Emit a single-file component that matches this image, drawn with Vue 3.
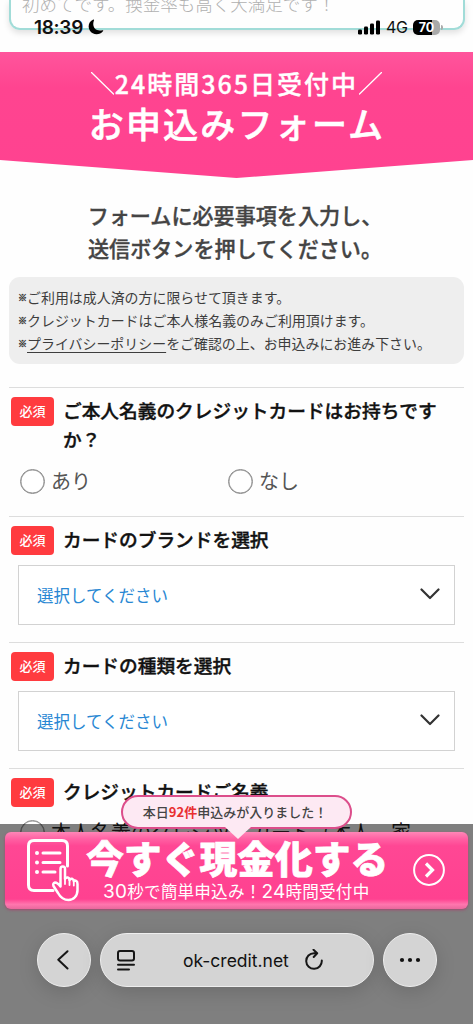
<script setup>
const notes = ['ご利用は成人済の方に限らせて頂きます。', 'クレジットカードはご本人様名義のみご利用頂けます。']
const selects = ['カードのブランドを選択', 'カードの種類を選択']
</script>

<template>
  <div class="screen">
    <main class="page">
      <div class="review">初めてです。換金率も高く大満足です！</div>
      <header class="banner">
        <div class="catch">
          <svg width="23" height="23" viewBox="0 0 23 23"><path d="M.5.5l22 21.5" /></svg>
          <span>24時間365日受付中</span>
          <svg width="23" height="23" viewBox="0 0 23 23"><path d="M22.5.5l-22 21.5" /></svg>
        </div>
        <h1>お申込みフォーム</h1>
      </header>
      <h2>フォームに必要事項を入力し、<br />送信ボタンを押してください。</h2>
      <div class="notice">
        <p v-for="n in notes" :key="n"><i>※</i>{{ n }}</p>
        <p><i>※</i><a>プライバシーポリシー</a>をご確認の上、お申込みにお進み下さい。</p>
      </div>
      <section class="row first">
        <div class="head"><b class="badge">必須</b><span class="label">ご本人名義のクレジットカードはお持ちですか？</span></div>
        <div class="radios">
          <label><i class="radio"></i>あり</label>
          <label><i class="radio"></i>なし</label>
        </div>
      </section>
      <section v-for="s in selects" :key="s" class="row pick">
        <div class="head"><b class="badge">必須</b><span class="label">{{ s }}</span></div>
        <div class="select">
          <span>選択してください</span>
          <svg width="20" height="12" viewBox="0 0 20 12"><path d="M1.5 1.5l8.5 8.5 8.5-8.5" /></svg>
        </div>
      </section>
      <section class="row last">
        <div class="head"><b class="badge">必須</b><span class="label">クレジットカードご名義</span></div>
        <div class="radios single"><label><i class="radio"></i>本人名義のクレジットカード（本人、家</label></div>
      </section>
    </main>

    <div class="status">
      <span class="time">18:39</span>
      <svg class="moon" width="16" height="16" viewBox="0 0 16 16"><path d="M5.3.5C.8 2.2-.6 7.6 1.8 11.5c3 4.8 10 5 13.3.5.3-.6 0-1-.7-.8C7.5 12.8 3.5 7.7 6 1.3 6.2.7 5.9.3 5.3.5z" /></svg>
      <svg class="signal" width="23" height="15" viewBox="0 0 23 15"><rect y="9.5" width="4" height="5" rx="1.3" /><rect x="6" y="6.5" width="4" height="8" rx="1.3" /><rect x="12" y="3.5" width="4" height="11" rx="1.3" /><rect x="18" y=".5" width="4" height="14" rx="1.3" /></svg>
      <span class="net">4G</span>
      <span class="battery">70</span><i class="nub"></i>
    </div>

    <div class="bottom">
      <div class="cta">
        <svg class="form" width="52" height="64" viewBox="0 0 52 64">
          <path d="M40.5 27V7q0-5.5-5.5-5.5H7Q1.5 1.500 1.500 7v39q0 5.500 5.500 5.500h19" />
          <path d="M16 14h17M16 23.5h17M16 33h12" />
          <circle cx="10" cy="14" r="2" /><circle cx="10" cy="23.5" r="2" /><circle cx="10" cy="33" r="2" />
          <path class="hand" d="M33.5 45V30q0-2.5 2.3-2.5T38 30v10q1-2 2.8-1.5 1.7.5 1.7 2.5 1-1.7 2.7-1.2 1.6.6 1.6 2.4 1-1 2.4-.3Q50.500 42.500 50.500 45v6c0 6-4 10-9 10-5.500 0-8-2.500-10.500-7l-4.500-7q-1-3 1.500-3.500 2.500 0 5.500 4z" />
          <path class="thin" d="M38 39v6M42.5 41v5M46.8 42.5v4" />
        </svg>
        <div class="words">
          <strong>今すぐ現金化する</strong>
          <small><i>30</i>秒で簡単申込み！<i>24</i>時間受付中</small>
        </div>
        <svg class="go" width="32" height="32" viewBox="0 0 32 32"><circle cx="16" cy="16" r="14.9" /><path d="M13 9.5l6.5 6.5-6.5 6.5" /></svg>
      </div>
      <nav class="browser">
        <div class="round"><svg width="12" height="20" viewBox="0 0 12 20"><path d="M10.5 1.2L1.3 9.8l9.2 8.7" /></svg></div>
        <div class="address">
          <svg class="reader" width="18" height="21" viewBox="0 0 18 21"><rect x="1" y="1" width="16" height="9.5" rx="2" /><path d="M1 14.7h16M1 19.5h11" /></svg>
          <span>ok-credit.net</span>
          <svg class="reload" width="18" height="21" viewBox="0 0 18 21"><path d="M16.8 11.5A7.8 7.8 0 1 1 9 4.2h3M8.5.8l3.7 3.5-3.5 3.700" /></svg>
        </div>
        <div class="round"><svg class="dots" width="22" height="6" viewBox="0 0 22 6"><circle cx="3" cy="3" r="2.1" /><circle cx="11" cy="3" r="2.1" /><circle cx="19" cy="3" r="2.1" /></svg></div>
      </nav>
    </div>
    <div class="balloon">
      <span>本日<em>92件</em>申込みが入りました！</span>
      <svg width="26" height="13" viewBox="0 0 26 13"><path d="M0 0h26L13 12z" /></svg>
    </div>
  </div>
</template>

<style>
body { margin: 0; background: #fefefe; }
</style>
<style scoped>
* { box-sizing: border-box; }
.screen { position: relative; width: 473px; height: 1024px; overflow: hidden; background: #fefefe; font-family: "Noto Sans CJK JP", sans-serif; }
h1, h2, p { margin: 0; }
i, em { font-style: normal; }
svg { display: block; flex: none; fill: none; stroke-linecap: round; stroke-linejoin: round; }
.review { width: 456px; height: 30px; margin: 0 9px; padding-left: 11px; border: 2px solid #a1dcd8; border-top: 0; border-radius: 0 0 11px 11px; box-shadow: 0 3px 6px #0000001f; color: #b0b0b0; font-size: 17.5px; font-weight: 300; line-height: 8px; white-space: nowrap; }
.banner { height: 126px; margin-top: 22px; padding-top: 15px; background: linear-gradient(#ff559c, #ff4490 28%, #ff4290); clip-path: polygon(0 0, 100% 0, 100% 108px, 50% 100%, 0 108px); color: #fff; }
.catch { display: flex; justify-content: center; align-items: center; height: 32px; gap: 1px; font-size: 25px; font-weight: 500; letter-spacing: 2px; white-space: nowrap; -webkit-text-stroke: .35px #fff; }
.catch span { line-height: 30px; padding-bottom: 1px; }
.catch svg { stroke: #fff; stroke-width: 1.3; }
h1 { text-align: center; height: 50px; line-height: 48px; padding-left: 1px; font-size: 35px; font-weight: 500; letter-spacing: 2.2px; -webkit-text-stroke: .6px #fff; }
h2 { margin-top: 21px; padding-right: 3px; text-align: center; color: #444; font-size: 21.1px; line-height: 33px; font-weight: 500; -webkit-text-stroke: .35px #444; }
.notice { height: 87px; margin: 12px 9px 0; padding: 8px 9px 0; border-radius: 11px; background: #eee; color: #3d3d3d; font-size: 13.95px; line-height: 24px; white-space: nowrap; }
.notice p { display: flex; height: 23px; }
.notice i { font-size: 9px; font-weight: 700; line-height: 25px; -webkit-text-stroke: .5px #3d3d3d; }
.notice a { text-decoration: underline; text-underline-offset: 3px; }
.row { margin: 0 9px; border-top: 1px solid #ddd; }
.first { margin-top: 23px; height: 129px; }
.pick { height: 126px; }
.head { display: flex; align-items: flex-start; padding: 9px 0 0 2px; }
.badge { flex: none; width: 43px; height: 29px; margin-right: 9px; border-radius: 4px; background: #ff3b3f; color: #fff; text-align: center; font-size: 13px; font-weight: 500; line-height: 28px; }
.label { color: #111; font-size: 18.7px; line-height: 29px; font-weight: 500; width: 380px; margin-top: -2px; margin-bottom: 2px; -webkit-text-stroke: .4px #111; }
.radios { display: flex; padding: 13px 0 0 11px; }
.radios label { display: flex; align-items: center; width: 208px; height: 26px; color: #555; font-size: 20px; font-weight: 400; line-height: 24px; white-space: nowrap; }
.radio { flex: none; width: 25px; height: 25px; margin-right: 6px; border: 1.5px solid #888; border-radius: 50%; background: #fff; box-shadow: inset 0 0 0 .5px #999; }
.single { padding-top: 12px; }
.single label { color: #222; }
.single .radio { background: none; }
.select { display: flex; align-items: center; justify-content: space-between; width: 437px; height: 60px; margin: 10px 0 0 9px; padding: 0 14px 0 18px; border: 1.5px solid #d2d2d2; background: #fff; color: #2887d3; font-size: 16.5px; }
.select span { margin-top: -1px; }
.select svg { stroke: #333; stroke-width: 2.2; margin-top: -3px; }
.status { position: absolute; top: 17px; left: 34px; right: 30px; height: 20px; display: flex; align-items: center; color: #111; font-family: Inter, sans-serif; }
.time { width: 50px; font-size: 19px; font-weight: 600; letter-spacing: -.3px; }
.moon { margin-left: 4px; fill: #000; }
.signal { margin-left: auto; fill: #000; }
.net { width: 22px; margin-left: 5px; font-size: 16px; letter-spacing: -.4px; }
.battery { width: 27px; height: 15px; margin-left: 5px; border-radius: 5px; background: linear-gradient(90deg, #000 72%, #a9a9a9 72%); color: #fff; text-align: center; font-size: 12.5px; font-weight: 700; line-height: 15px; }
.nub { width: 2px; height: 5px; margin-left: 1px; border-radius: 0 2px 2px 0; background: #aaa; }
.bottom { position: absolute; top: 824px; left: 0; width: 473px; height: 200px; padding-top: 8px; background: #0000007f; }
.cta { display: flex; width: 463px; height: 77px; margin-left: 5px; border-radius: 6px; background: linear-gradient(#ff86b7, #ff60a3 9%, #ff4794 18%, #ff4190 87%, #ff76ae 94%, #e9689d); box-shadow: 0 1px 3px #b52b68aa; }
.form { margin: 7px 0 0 22px; stroke: #fff; stroke-width: 3; }
.form circle { fill: #fff; stroke: none; }
.form .hand { fill: #ff4290; stroke-width: 2.5; }
.form .thin { stroke-width: 1.8; }
.words { width: 310px; margin-left: 7px; display: flex; flex-direction: column; color: #fff; white-space: nowrap; }
.words strong { height: 47px; font-size: 37.8px; line-height: 49px; font-weight: 900; -webkit-text-stroke: .7px #fff; }
.words small { display: flex; height: 24px; margin-left: 17px; font-size: 16.6px; letter-spacing: .2px; line-height: 24px; }
.words small i { font-family: Inter, sans-serif; font-size: 19px; font-weight: 400; line-height: 25px; }
.go { margin: 22px 0 0 17px; stroke: #fff; stroke-width: 2; }
.go path { stroke-width: 3.2; stroke-linecap: butt; stroke-linejoin: miter; }
.browser { display: flex; gap: 9px; margin: 24px 0 0 37px; }
.round, .address { display: flex; align-items: center; height: 54px; border: 1px solid #eee; border-radius: 27px; background: #d4d4d4; box-shadow: 0 5px 20px #00000026; }
.round { width: 54px; justify-content: center; }
.round svg { stroke: #161616; stroke-width: 2; margin-right: 3px; }
.round .dots { margin: 0 0 1px; fill: #111; stroke: none; }
.address { width: 274px; padding-left: 16px; color: #111; font-family: Inter, sans-serif; font-size: 17.5px; }
.address svg { stroke: #161616; stroke-width: 2; }
.address span { width: 107px; margin: 0 15px 0 48px; white-space: nowrap; }
.address .reload { margin-top: -2px; }
.balloon { position: absolute; left: 121px; top: 795px; width: 231px; height: 34px; padding-right: 3px; border: 2px solid #dc4e8b; border-radius: 17px; background: #fde9f3; color: #444; font-size: 13px; font-weight: 500; line-height: 30px; text-align: center; white-space: nowrap; }
.balloon em { color: #e92f31; font-weight: 700; }
.balloon svg { position: absolute; left: 102px; top: 30px; fill: #fde9f3; }
</style>
